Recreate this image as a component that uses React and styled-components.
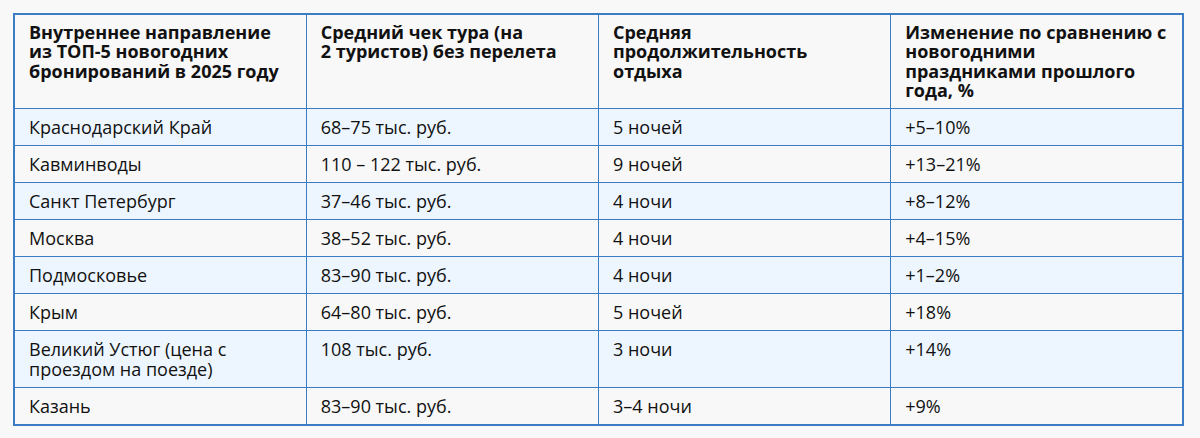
import React from "react";
import styled, { createGlobalStyle } from "styled-components";

const GlobalStyle = createGlobalStyle`
  html, body {
    margin: 0;
    padding: 0;
    background: #f8f8f8;
  }
  body {
    font-family: "Open Sans", "Noto Sans", sans-serif;
    color: #111;
  }
`;

const Page = styled.div`
  padding: 13px 16px 13px 13px;
`;

const Table = styled.table`
  width: 1171px;
  table-layout: fixed;
  border-collapse: collapse;
  border: 2px solid #3b7cc3;
`;

const HeadCell = styled.th`
  text-align: left;
  vertical-align: top;
  font-size: 18px;
  line-height: 19.3px;
  font-weight: 700;
  padding: 8px 14px 8px 14px;
  border: 1px solid #3b7cc3;
`;

const Row = styled.tr`
  background: ${(p) => (p.$tinted ? "#edf6ff" : "transparent")};
`;

const Cell = styled.td`
  vertical-align: top;
  font-size: 18px;
  line-height: 20px;
  padding: 8px 14px 8px 14px;
  border: 1px solid #3b7cc3;
`;

const headers = [
  "Внутреннее направление из ТОП-5 новогодних бронирований в 2025 году",
  "Средний чек тура (на 2\u00A0туристов) без перелета",
  "Средняя продолжительность отдыха",
  "Изменение по сравнению с новогодними праздниками прошлого года, %",
];

const rows = [
  ["Краснодарский Край", "68–75 тыс. руб.", "5 ночей", "+5–10%"],
  ["Кавминводы", "110 – 122 тыс. руб.", "9 ночей", "+13–21%"],
  ["Санкт Петербург", "37–46 тыс. руб.", "4 ночи", "+8–12%"],
  ["Москва", "38–52 тыс. руб.", "4 ночи", "+4–15%"],
  ["Подмосковье", "83–90 тыс. руб.", "4 ночи", "+1–2%"],
  ["Крым", "64–80 тыс. руб.", "5 ночей", "+18%"],
  ["Великий Устюг (цена с проездом на поезде)", "108 тыс. руб.", "3 ночи", "+14%"],
  ["Казань", "83–90 тыс. руб.", "3–4 ночи", "+9%"],
];

const App = () => {
  return (
    <>
      <GlobalStyle />
      <Page>
        <Table>
          <thead>
            <tr>
              {headers.map((h) => (
                <HeadCell key={h}>{h}</HeadCell>
              ))}
            </tr>
          </thead>
          <tbody>
            {rows.map((r, i) => (
              <Row key={r[0]} $tinted={i % 2 === 0}>
                {r.map((c, j) => (
                  <Cell key={j}>{c}</Cell>
                ))}
              </Row>
            ))}
          </tbody>
        </Table>
      </Page>
    </>
  );
};

export default App;
